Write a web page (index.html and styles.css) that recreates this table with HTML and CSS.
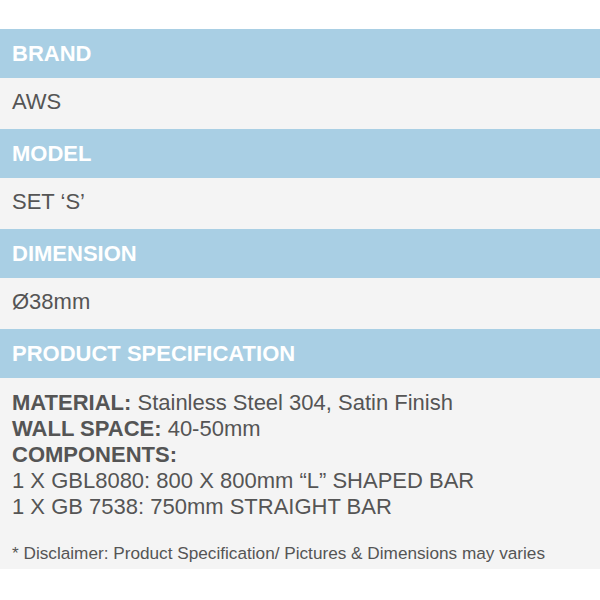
FILE: index.html
```html
<!DOCTYPE html>
<html>
<head>
<meta charset="utf-8">
<link rel="stylesheet" href="styles.css">
</head>
<body>
<div class="specs">
  <div class="head">BRAND</div>
  <div class="val">AWS</div>
  <div class="head">MODEL</div>
  <div class="val">SET ‘S’</div>
  <div class="head">DIMENSION</div>
  <div class="val">Ø38mm</div>
  <div class="head">PRODUCT SPECIFICATION</div>
  <div class="body">
    <p class="lines"><b>MATERIAL:</b> Stainless Steel 304, Satin Finish<br>
    <b>WALL SPACE:</b> 40-50mm<br>
    <b>COMPONENTS:</b><br>
    1 X GBL8080: 800 X 800mm “L” SHAPED BAR<br>
    1 X GB 7538: 750mm STRAIGHT BAR</p>
    <p class="note">* Disclaimer: Product Specification/ Pictures &amp; Dimensions may varies</p>
  </div>
</div>
</body>
</html>
```
FILE: styles.css
```css
html, body {
  margin: 0;
  padding: 0;
  background: #ffffff;
}
body {
  font-family: "Liberation Sans", Arial, sans-serif;
  color: #555555;
}
.specs {
  margin-top: 29px;
  display: flex;
  flex-direction: column;
}
.head {
  height: 49px;
  background: #a9cfe4;
  color: #ffffff;
  font-weight: bold;
  font-size: 22px;
  display: flex;
  align-items: center;
  padding-left: 12px;
}
.val {
  height: 51px;
  box-sizing: border-box;
  padding-bottom: 3px;
  background: #f4f4f4;
  font-size: 22px;
  display: flex;
  align-items: center;
  padding-left: 12px;
}
.body {
  height: 191px;
  box-sizing: border-box;
  background: #f4f4f4;
  padding: 12px 12px 0;
}
.lines {
  margin: 0;
  font-size: 22px;
  line-height: 26px;
}
.note {
  margin: 23px 0 0;
  font-size: 17.2px;
  line-height: 20px;
}
```
